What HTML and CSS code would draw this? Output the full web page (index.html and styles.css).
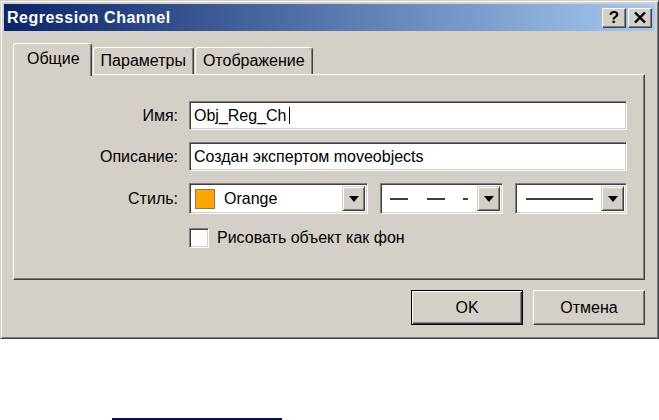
FILE: index.html
```html
<!DOCTYPE html>
<html>
<head>
  <title>Regression Channel</title>
  <link rel="stylesheet" href="styles.css">
</head>
<body>
  <div class="dialog">
    <div class="titlebar">
      <span class="title">Regression Channel</span>
      <div class="caption-buttons">
        <div class="cap-btn help">?</div>
        <div class="cap-btn close">
          <svg width="12" height="11" viewBox="0 0 12 11"><path d="M1 0.5 L11 10.5 M11 0.5 L1 10.5" stroke="#000" stroke-width="2.4"/></svg>
        </div>
      </div>
    </div>

    <div class="content">
      <div class="tabs">
        <div class="tab active">Общие</div>
        <div class="tab">Параметры</div>
        <div class="tab">Отображение</div>
      </div>

      <div class="panel">
        <div class="form">
          <div class="label">Имя:</div>
          <div class="field"><span>Obj_Reg_Ch</span><span class="caret"></span></div>

          <div class="label">Описание:</div>
          <div class="field"><span>Создан экспертом moveobjects</span></div>

          <div class="label">Стиль:</div>
          <div class="combos">
            <div class="combo color-combo">
              <div class="combo-value">
                <span class="swatch"></span>
                <span>Orange</span>
              </div>
              <div class="drop-btn"><span class="arrow"></span></div>
            </div>
            <div class="combo dash-combo">
              <div class="combo-value">
                <svg width="80" height="4" viewBox="0 0 80 4"><path d="M0 2 H18 M37 2 H55 M73 2 H78" stroke="#000" stroke-width="1.6"/></svg>
              </div>
              <div class="drop-btn"><span class="arrow"></span></div>
            </div>
            <div class="combo width-combo">
              <div class="combo-value">
                <svg width="68" height="4" viewBox="0 0 68 4"><path d="M0 2 H67" stroke="#000" stroke-width="1.6"/></svg>
              </div>
              <div class="drop-btn"><span class="arrow"></span></div>
            </div>
          </div>

          <div class="check-row">
            <span class="checkbox"></span>
            <span>Рисовать объект как фон</span>
          </div>
        </div>
      </div>

      <div class="actions">
        <div class="btn default">OK</div>
        <div class="btn">Отмена</div>
      </div>
    </div>
  </div>

  <div class="underline"></div>
</body>
</html>
```

FILE: styles.css
```css
body {
  margin: 0;
  background: #fff;
  font-family: "Liberation Sans", Arial, sans-serif;
  font-size: 16px;
  color: #000;
}
.dialog {
  width: 659px;
  height: 339px;
  box-sizing: border-box;
  padding: 3px;
  background: #d4d0c8;
  border: 1px solid;
  border-color: #d4d0c8 #404040 #404040 #d4d0c8;
  box-shadow: inset 1px 1px #fff, inset -1px -1px #808080;
  display: flex;
  flex-direction: column;
}
.titlebar {
  height: 27px;
  display: flex;
  align-items: center;
  padding: 0 3px 0 3px;
  background: linear-gradient(to right, #0a246a, #a6caf0);
}
.title {
  color: #fff;
  font-weight: bold;
  letter-spacing: 0.5px;
}
.caption-buttons {
  margin-left: auto;
  display: flex;
  gap: 2px;
}
.cap-btn {
  width: 24px;
  height: 20px;
  box-sizing: border-box;
  display: flex;
  align-items: center;
  justify-content: center;
  background: #d4d0c8;
  border: 1px solid;
  border-color: #fff #404040 #404040 #fff;
  box-shadow: inset -1px -1px #808080;
  font-weight: bold;
  font-size: 17px;
}
.content {
  flex: 1;
  padding: 12px 10px 0 9px;
  display: flex;
  flex-direction: column;
}
.tabs {
  height: 31px;
  display: flex;
  align-items: flex-end;
}
.tab {
  height: 27px;
  box-sizing: border-box;
  padding: 0 7px;
  display: flex;
  align-items: center;
  border: 1px solid;
  border-bottom: none;
  border-color: #fff #404040 transparent #fff;
  border-radius: 3px 3px 0 0;
  box-shadow: inset -1px 0 #808080;
  background: #d4d0c8;
  margin-right: 1px;
}
.tab.active {
  height: 33px;
  margin-bottom: -2px;
  padding: 0 11px 0 13px;
  margin-right: 1px;
  position: relative;
  z-index: 1;
  padding-bottom: 3px;
}
.panel {
  height: 206px;
  box-sizing: border-box;
  padding-top: 26px;
  border: 1px solid;
  border-color: #fff #404040 #404040 #fff;
  box-shadow: inset -1px -1px #808080;
}
.form {
  display: grid;
  grid-template-columns: 164px 438px;
  column-gap: 11px;
  row-gap: 12px;
}
.label {
  display: flex;
  align-items: center;
  justify-content: flex-end;
}
.field {
  height: 29px;
  box-sizing: border-box;
  padding: 0 4px;
  display: flex;
  align-items: center;
  background: #fff;
  border: 1px solid;
  border-color: #808080 #fff #fff #808080;
  box-shadow: inset 1px 1px #404040, inset -1px -1px #d4d0c8;
}
.caret {
  width: 1px;
  height: 17px;
  margin-left: 2px;
  background: #000;
}
.combos {
  display: flex;
  gap: 12px;
}
.combo {
  height: 31px;
  box-sizing: border-box;
  padding: 2px;
  display: flex;
  background: #fff;
  border: 1px solid;
  border-color: #808080 #fff #fff #808080;
  box-shadow: inset 1px 1px #404040, inset -1px -1px #d4d0c8;
}
.color-combo { width: 179px; }
.dash-combo { width: 123px; }
.width-combo { width: 112px; }
.combo-value {
  flex: 1;
  display: flex;
  align-items: center;
}
.color-combo .combo-value { padding-left: 3px; }
.dash-combo .combo-value { padding-left: 7px; }
.width-combo .combo-value { padding-left: 8px; }
.swatch {
  width: 20px;
  height: 20px;
  box-sizing: border-box;
  margin-right: 9px;
  background: #ffa500;
  border: 1px solid #8a7a5a;
}
.drop-btn {
  width: 23px;
  box-sizing: border-box;
  display: flex;
  align-items: center;
  justify-content: center;
  background: #d4d0c8;
  border: 1px solid;
  border-color: #d4d0c8 #404040 #404040 #d4d0c8;
  box-shadow: inset 1px 1px #fff, inset -1px -1px #808080;
}
.arrow {
  width: 0;
  height: 0;
  border-left: 5px solid transparent;
  border-right: 5px solid transparent;
  border-top: 6px solid #000;
}
.check-row {
  grid-column: 2;
  margin-top: 2px;
  display: flex;
  align-items: center;
}
.checkbox {
  width: 20px;
  height: 20px;
  box-sizing: border-box;
  margin-right: 8px;
  background: #fff;
  border: 1px solid;
  border-color: #808080 #fff #fff #808080;
  box-shadow: inset 1px 1px #404040, inset -1px -1px #d4d0c8;
}
.actions {
  margin-top: 10px;
  display: flex;
  justify-content: flex-end;
  gap: 10px;
}
.btn {
  width: 112px;
  height: 35px;
  box-sizing: border-box;
  display: flex;
  align-items: center;
  justify-content: center;
  border: 1px solid;
  border-color: #fff #404040 #404040 #fff;
  box-shadow: inset -1px -1px #808080;
}
.btn.default {
  border-color: #000;
  box-shadow: inset 1px 1px #fff, inset -1px -1px #404040, inset -2px -2px #808080;
}
.underline {
  width: 170px;
  height: 2px;
  margin: 79px 0 0 112px;
  background: #0b0b5c;
}
```
